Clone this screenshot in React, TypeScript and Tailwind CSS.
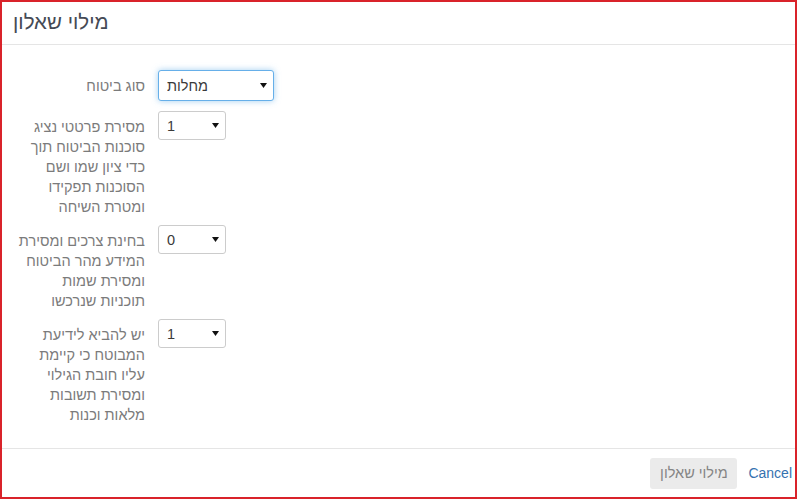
import React from "react";

const font = "font-['Liberation_Sans','DejaVu_Sans',sans-serif]";

function Arrow() {
  return (
    <svg
      width="7"
      height="5"
      viewBox="0 0 7 5"
      className="pointer-events-none absolute right-[7px] top-1/2 -translate-y-[3px]"
    >
      <path d="M0 0 L7 0 L3.5 5 Z" fill="#111" />
    </svg>
  );
}

interface FakeSelectProps {
  value: string;
  options: string[];
  wide?: boolean;
  focused?: boolean;
}

function FakeSelect({ value, options, wide, focused }: FakeSelectProps) {
  return (
    <div className={`relative ${wide ? "w-[116px] h-[31px]" : "w-[68px] h-[29px]"}`}>
      <select
        defaultValue={value}
        dir="ltr"
        className={`h-full w-full appearance-none rounded-[3px] border bg-white pl-[8px] pt-[2px] text-[14.5px] text-[#3a3a3a] outline-none ${font} ${
          focused
            ? "border-[#66afe9] shadow-[0_0_6px_rgba(102,175,233,0.6)]"
            : "border-[#ccc]"
        }`}
      >
        {options.map((o) => (
          <option key={o} value={o}>
            {o}
          </option>
        ))}
      </select>
      <Arrow />
    </div>
  );
}

interface RowProps {
  lines: string[];
  children: React.ReactNode;
  className?: string;
}

function FormRow({ lines, children, className }: RowProps) {
  return (
    <div className={`flex items-start gap-[13px] ${className ?? ""}`}>
      <div
        dir="rtl"
        className="w-[143px] shrink-0 whitespace-nowrap pt-[6px] text-right text-[14.5px] leading-[20px] text-[#7b7b7b]"
      >
        {lines.map((l, i) => (
          <React.Fragment key={i}>
            {l}
            {i < lines.length - 1 && <br />}
          </React.Fragment>
        ))}
      </div>
      {children}
    </div>
  );
}

export default function App() {
  return (
    <div
      className={`flex h-[499px] w-[797px] flex-col border-2 border-[#d9232a] bg-white ${font}`}
    >
      <header className="flex h-[43px] shrink-0 items-center border-b border-[#e5e5e5] pl-[11px]">
        <h4 className="pb-[2px] text-[20.5px] font-normal text-[#454a55]">מילוי שאלון</h4>
      </header>

      <main className="flex flex-1 flex-col pt-[25px]">
        <FormRow lines={["סוג ביטוח"]} className="mb-[10px]">
          <FakeSelect value="מחלות" options={["מחלות", "חיים", "רכב"]} wide focused />
        </FormRow>
        <FormRow
          lines={[
            "מסירת פרטטי נציג",
            "סוכנות הביטוח תוך",
            "כדי ציון שמו ושם",
            "הסוכנות תפקידו",
            "ומטרת השיחה",
          ]}
          className="mb-[8px]"
        >
          <FakeSelect value="1" options={["0", "1"]} />
        </FormRow>
        <FormRow
          lines={[
            "בחינת צרכים ומסירת",
            "המידע מהר הביטוח",
            "ומסירת שמות",
            "תוכניות שנרכשו",
          ]}
          className="mb-[8px]"
        >
          <FakeSelect value="0" options={["0", "1"]} />
        </FormRow>
        <FormRow
          lines={[
            "יש להביא לידיעת",
            "המבוטח כי קיימת",
            "עליו חובת הגילוי",
            "ומסירת תשובות",
            "מלאות וכנות",
          ]}
        >
          <FakeSelect value="1" options={["0", "1"]} />
        </FormRow>
      </main>

      <footer className="flex h-[49px] shrink-0 items-center justify-end gap-[11px] border-t border-[#e5e5e5] pr-[3px] pt-[1px]">
        <button className="h-[31px] w-[87px] rounded-[3px] bg-[#ebebeb] text-[14.5px] text-[#858585]">
          מילוי שאלון
        </button>
        <a href="#" className="text-[14px] text-[#3572b0]">
          Cancel
        </a>
      </footer>
    </div>
  );
}
